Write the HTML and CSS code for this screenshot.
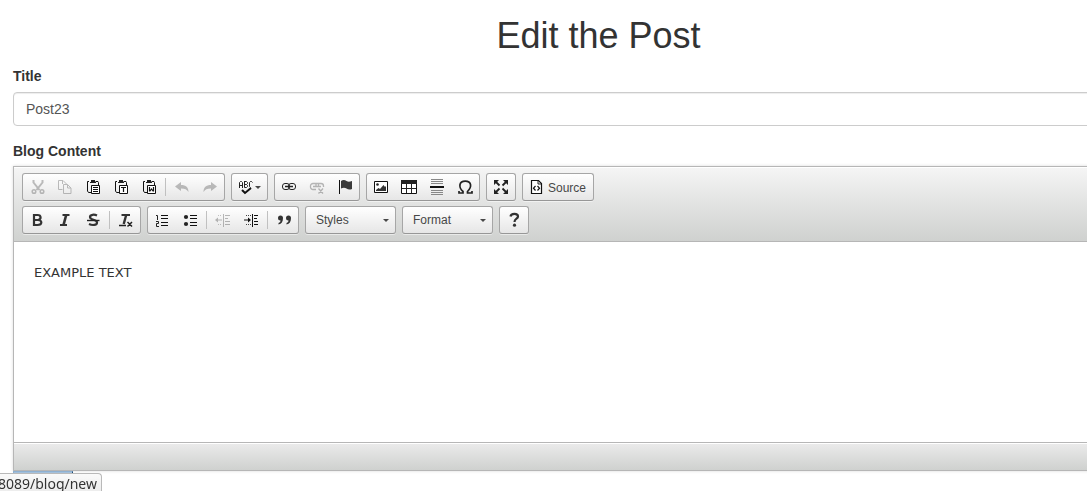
FILE: index.html
```html
<!DOCTYPE html>
<html lang="en">
<head>
<meta charset="utf-8">
<title>Edit the Post</title>
<link rel="stylesheet" href="styles.css">
</head>
<body>
<main class="container">
  <h1 class="heading">Edit the Post</h1>
  <form class="form">
    <div class="field">
      <label class="label" for="title">Title</label>
      <input class="input" id="title" type="text" value="Post23">
    </div>
    <div class="field">
      <label class="label" for="content">Blog Content</label>
      <div class="editor">
        <div class="toolbar">
          <div class="row">
            <div class="group">
              <button type="button" class="tool disabled" aria-label="Cut"><svg class="icon" viewBox="0 0 16 16"><path d="M4.500 1v2.500L10.500 11M13.500 1v2.500L7.500 11" fill="none" stroke="#333" stroke-width="2"/><g fill="none" stroke="#333" stroke-width="1.500"><circle cx="5" cy="12.500" r="1.800"/><circle cx="13" cy="12.500" r="1.800"/></g></svg></button>
              <button type="button" class="tool disabled" aria-label="Copy"><svg class="icon" viewBox="0 0 16 16"><path d="M5.500 10.500h-4v-9H6l3.500 3.500M5.500 1.500V5M6.500 5.500h4l3.500 3.500v5.500H6.500zM10.500 5.500V9H14" fill="none" stroke="#333"/></svg></button>
              <button type="button" class="tool" aria-label="Paste"><svg class="icon" viewBox="0 0 16 16"><path d="M4 2.500H2.500V12l1 1.500H6M10.500 2.500H13l.5 1V6" fill="none" stroke="#111"/><path d="M5 3h1V1h4v2h1v1H5z" fill="#222"/><path d="M6.500 6.500h8v8h-8z" fill="#fff" stroke="#111"/><path d="M8 8.500h5M8 10.500h5M8 12.500h5" stroke="#111"/></svg></button>
              <button type="button" class="tool" aria-label="Paste as plain text"><svg class="icon" viewBox="0 0 16 16"><path d="M4 2.500H2.500V12l1 1.500H6M10.500 2.500H13l.5 1V6" fill="none" stroke="#111"/><path d="M5 3h1V1h4v2h1v1H5z" fill="#222"/><path d="M6.500 6.500h8v8h-8z" fill="#fff" stroke="#111"/><path d="M8 8.500h5M10.500 8.500V13" fill="none" stroke="#111" stroke-width="1.200"/></svg></button>
              <button type="button" class="tool" aria-label="Paste from Word"><svg class="icon" viewBox="0 0 16 16"><path d="M4 2.500H2.500V12l1 1.500H6M10.500 2.500H13l.5 1V6" fill="none" stroke="#111"/><path d="M5 3h1V1h4v2h1v1H5z" fill="#222"/><path d="M6.500 6.500h8v8h-8z" fill="#fff" stroke="#111"/><path d="M8.500 8v4h.5l1.500-2 1.500 2h.5V8" fill="none" stroke="#111" stroke-width="1.200"/></svg></button>
              <span class="separator"></span>
              <button type="button" class="tool disabled" aria-label="Undo"><svg class="icon" viewBox="0 0 16 16"><path d="M1 7.500L7 3v3c5 0 7.500 2.500 7.500 7-1.500-2.500-3.500-3.500-7.500-3.500V12z" fill="#333"/></svg></button>
              <button type="button" class="tool disabled" aria-label="Redo"><svg class="icon" viewBox="0 0 16 16"><path d="M15 7.500L9 3v3c-5 0-7.500 2.500-7.500 7C3 10.500 5 9.500 9 9.500V12z" fill="#333"/></svg></button>
            </div>
            <div class="group">
              <button type="button" class="tool" aria-label="Spell check"><svg class="icon" viewBox="0 0 16 16"><path d="M1.500 9V3.500l1-1h1l1 1V9M1.500 6.500h3M6.500 2v6.500h2l1-1v-1l-1-1h-2M6.500 2.500h2l1 1v1l-1 1M14.500 3.500l-1-1h-1l-1 1v4l1 1" fill="none" stroke="#222"/><path d="M4 11l3 3L13 9" fill="none" stroke="#111" stroke-width="2"/></svg><span class="caret"></span></button>
            </div>
            <div class="group">
              <button type="button" class="tool" aria-label="Link"><svg class="icon" viewBox="0 0 16 16"><rect x="1.500" y="4.500" width="7" height="6" rx="2.500" fill="none" stroke="#222"/><rect x="7.500" y="4.500" width="7" height="6" rx="2.500" fill="none" stroke="#222"/><path d="M4 7.500h8" stroke="#222" stroke-width="1.500"/></svg></button>
              <button type="button" class="tool disabled" aria-label="Unlink"><svg class="icon" viewBox="0 0 16 16"><path d="M7 10.500H4A2.500 2.500 0 0 1 1.500 8V7A2.500 2.500 0 0 1 4 4.500h8A2.500 2.500 0 0 1 14.500 7v1M4 7.500h8M7 5v2.500M9.500 5v2.500M9.500 9.500l4.500 5M14 9.500l-4.500 5" fill="none" stroke="#222" stroke-width="1.300"/></svg></button>
              <button type="button" class="tool" aria-label="Anchor"><svg class="icon" viewBox="0 0 16 16"><path d="M2.500 1v14" stroke="#111"/><path d="M4 2c2-1.500 4-1 5.500 0s3 1 5.500 0v8c-2.500 1-4 .5-5.500-.5S6 8.500 4 9.500z" fill="#3a3a3a"/></svg></button>
            </div>
            <div class="group">
              <button type="button" class="tool" aria-label="Image"><svg class="icon" viewBox="0 0 16 16"><path d="M1.500 2.500h13v11h-13z" fill="#fff" stroke="#111"/><circle cx="4.500" cy="5.500" r="1.300" fill="#222"/><path d="M3 12v-1l2.500-2L7 10l3.500-4 1.500 2 1-1v5z" fill="#333"/></svg></button>
              <button type="button" class="tool" aria-label="Table"><svg class="icon" viewBox="0 0 16 16"><path d="M.5 1.500h15v13H.5z" fill="#fff" stroke="#111"/><path d="M0 1h16v4H0z" fill="#222"/><path d="M5.500 5v9M10.500 5v9M1 9.500h14" stroke="#222"/></svg></button>
              <button type="button" class="tool" aria-label="Horizontal line"><svg class="icon" viewBox="0 0 16 16"><path d="M2 .5h12M2 2.500h12M2 4.500h12M2 11.500h12M2 13.500h12M2 15.500h12" stroke="#888"/><path d="M1 7h14v2H1z" fill="#111"/></svg></button>
              <button type="button" class="tool" aria-label="Special character"><svg class="icon" viewBox="0 0 16 16"><path d="M2 12v2h4v-1.500C3 10 2.500 8 3 5.500 4 1 12.500 1 13.500 5.500c.5 2.500-.5 4.500-3 7V14H15v-2" fill="none" stroke="#222" stroke-width="1.700"/></svg></button>
            </div>
            <div class="group">
              <button type="button" class="tool" aria-label="Maximize"><svg class="icon" viewBox="0 0 16 16"><path d="M1 1h5L1 6zM15 1v5l-5-5zM1 15v-5l5 5zM15 15h-5l5-5z" fill="#222"/><path d="M3 3l3.500 3.500M13 3L9.500 6.500M3 13l3.500-3.500M13 13L9.500 9.500" stroke="#222" stroke-width="1.800"/></svg></button>
            </div>
            <div class="group">
              <button type="button" class="tool"><svg class="icon" viewBox="0 0 16 16"><path d="M2.500 1.500h7l3 3v10h-10z" fill="#fff" stroke="#111" stroke-width="1.200"/><path d="M9 1.500V5h3.500" fill="none" stroke="#222"/><path d="M6.500 7l-2 2.200 2 2.300M8.500 7l2 2.200-2 2.300" fill="none" stroke="#111" stroke-width="1.200"/></svg><span class="tool-text">Source</span></button>
            </div>
          </div>
          <div class="row">
            <div class="group">
              <button type="button" class="tool" aria-label="Bold"><svg class="icon" viewBox="0 0 16 16"><path d="M5 3h3.500c4 0 4 4.500.5 5 4.500 0 4.500 5-.5 5H5zM5 8h4" fill="none" stroke="#333" stroke-width="2.200"/></svg></button>
              <button type="button" class="tool" aria-label="Italic"><svg class="icon" viewBox="0 0 16 16"><path d="M5.500 3h7M3 13h7" stroke="#333" stroke-width="1.800"/><path d="M9.200 3L6.500 13" stroke="#333" stroke-width="2.600"/></svg></button>
              <button type="button" class="tool" aria-label="Strikethrough"><svg class="icon" viewBox="0 0 16 16"><path d="M12 3.500C9.500 2.300 5 2.300 5 5c0 3.500 7 2 7 5.500 0 3-5 3-8 1.500" fill="none" stroke="#333" stroke-width="2.200"/><path d="M2 8.500h12.500" stroke="#222" stroke-width="1.400"/></svg></button>
              <span class="separator"></span>
              <button type="button" class="tool" aria-label="Remove format"><svg class="icon" viewBox="0 0 16 16"><path d="M3.500 3H12" stroke="#333" stroke-width="2"/><path d="M8.200 3L5.700 12" stroke="#333" stroke-width="2.400"/><path d="M1 13.500h7M9.500 10l4.500 4.500M14 10l-4.500 4.500" stroke="#222" stroke-width="1.500"/></svg></button>
            </div>
            <div class="group">
              <button type="button" class="tool" aria-label="Numbered list"><svg class="icon" viewBox="0 0 16 16"><path d="M7 3.500h7M7 6.500h7M7 10.500h7M7 13.500h7" stroke="#111"/><path d="M2 3.500h1.500V8M2 9.500h2.500v2h-2v3H5" fill="none" stroke="#222"/></svg></button>
              <button type="button" class="tool" aria-label="Bulleted list"><svg class="icon" viewBox="0 0 16 16"><path d="M8 3.500h7M8 6.500h7M8 10.500h7M8 13.500h7" stroke="#111"/><circle cx="4" cy="5" r="2.100" fill="#222"/><circle cx="4" cy="12" r="2.100" fill="#222"/></svg></button>
              <span class="separator"></span>
              <button type="button" class="tool disabled" aria-label="Decrease indent"><svg class="icon" viewBox="0 0 16 16"><path d="M8.500 2v13M10 3.500h5M10 6.500h3M10 9.500h5M10 12.500h5M1 8h6" stroke="#222"/><path d="M3 3.500h4M3 12.500h4" stroke="#444" stroke-dasharray="1"/><path d="M0 8l3-2.500v5z" fill="#222"/></svg></button>
              <button type="button" class="tool" aria-label="Increase indent"><svg class="icon" viewBox="0 0 16 16"><path d="M9.500 2v13M11 3.500h4M11 6.500h3M11 9.500h4M11 12.500h4M1 8h5" stroke="#111"/><path d="M3 3.500h5M3 12.500h5" stroke="#444" stroke-dasharray="1"/><path d="M8 8L5 5.500v5z" fill="#111"/></svg></button>
              <span class="separator"></span>
              <button type="button" class="tool" aria-label="Block quote"><svg class="icon" viewBox="0 0 16 16"><path d="M7 6c0 3.500-1.500 6-4.500 6.500V11C4 10.500 4.500 9.500 4.500 8.500A2.500 2.500 0 1 1 7 6zM15 6c0 3.500-1.500 6-4.500 6.500V11c1.500-.5 2-1.500 2-2.500A2.500 2.500 0 1 1 15 6z" fill="#333"/></svg></button>
            </div>
            <button type="button" class="combo"><span>Styles</span><span class="caret"></span></button>
            <button type="button" class="combo"><span>Format</span><span class="caret"></span></button>
            <div class="group">
              <button type="button" class="tool" aria-label="Help"><svg class="icon" viewBox="0 0 16 16"><path d="M4.500 4.500C5 1 12 1 12 4.500c0 2.500-3.500 2-3.500 5.500" fill="none" stroke="#333" stroke-width="2.200"/><circle cx="8.500" cy="13.200" r="1.600" fill="#333"/></svg></button>
            </div>
          </div>
        </div>
        <textarea class="content" id="content">EXAMPLE TEXT</textarea>
        <div class="editor-foot"></div>
      </div>
    </div>
    <button type="submit" class="submit" aria-label="Save"></button>
  </form>
</main>
<div class="status"><span>8089/blog/new</span></div>
</body>
</html>
```
FILE: styles.css
```css
* { box-sizing: border-box; }

body {
  margin: 0;
  height: 100vh;
  overflow: hidden;
  background: #fff;
  color: #333;
  font: 14px/20px "Liberation Sans", Arial, sans-serif;
}

/* The form runs past the right edge of the window. */
.container { margin: 0 -97px 0 13px; }

.heading {
  margin: 0;
  padding: 16px 0 10px;
  font-size: 36px;
  font-weight: 400;
  line-height: 40px;
  text-align: center;
}

.field { margin-bottom: 15px; }

.label {
  display: block;
  margin-bottom: 5px;
  font-weight: 700;
}

.input {
  display: block;
  width: 100%;
  height: 34px;
  margin-top: 6px;
  padding: 6px 12px;
  border: 1px solid #ccc;
  border-radius: 4px;
  background: #fff;
  box-shadow: inset 0 1px 1px rgba(0, 0, 0, .075);
  color: #555;
  font: inherit;
}

.editor {
  border: 1px solid #b6b6b6;
  box-shadow: 0 0 3px rgba(0, 0, 0, .15);
}

.toolbar {
  padding: 6px 8px 2px;
  border-bottom: 1px solid #b6b6b6;
  background: linear-gradient(#f5f5f5, #cfd1cf);
  box-shadow: inset 0 1px 0 #fff;
}

.row {
  display: flex;
  gap: 6px;
  padding-bottom: 5px;
}

.group, .combo {
  display: flex;
  align-items: center;
  height: 28px;
  border: 1px solid #a6a6a6;
  border-bottom-color: #979797;
  border-radius: 3px;
  background: linear-gradient(#fff, #e6e6e6);
  box-shadow: 0 1px 0 rgba(255, 255, 255, .5);
}

.tool {
  display: flex;
  align-items: center;
  height: 26px;
  padding: 0 6px;
  border: 0;
  background: none;
  color: #484848;
  font: 12px/16px "Liberation Sans", Arial, sans-serif;
}

.icon {
  display: block;
  width: 16px;
  height: 16px;
}

.disabled .icon { opacity: .3; }

.separator {
  width: 1px;
  height: 18px;
  margin: 0 2px;
  background: #c0c0c0;
}

.tool-text { padding: 2px 1px 0 3px; }

.caret {
  border: 3px solid transparent;
  border-top-color: #474747;
  border-bottom: 0;
}

.tool .caret { margin-left: 1px; }

.combo {
  justify-content: space-between;
  width: 91px;
  padding: 0 6px 0 10px;
  color: #474747;
  font: 12px/26px "Liberation Sans", Arial, sans-serif;
}

.content {
  display: block;
  width: 100%;
  height: 200px;
  padding: 20px;
  border: 0;
  outline: 0;
  resize: none;
  background: #fff;
  color: #333;
  font: 13px/21px "DejaVu Sans", sans-serif;
}

.editor-foot {
  height: 28px;
  border-top: 1px solid #b6b6b6;
  background: linear-gradient(#ebebeb, #cfd1cf);
  box-shadow: inset 0 1px 0 #fff;
}

.field:last-of-type { margin-bottom: 0; }

.submit {
  display: block;
  width: 60px;
  height: 34px;
  border: 1px solid #8fb0d0;
  border-right-color: #204d74;
  background: #a3c0dc;
}

.status {
  position: fixed;
  bottom: 0;
  left: 0;
  display: flex;
  justify-content: flex-end;
  width: 102px;
  height: 18px;
  padding: 0 4px;
  overflow: hidden;
  border: 1px solid #b9b9b9;
  border-width: 1px 1px 0 0;
  border-radius: 0 4px 0 0;
  background: linear-gradient(#fafafa, #ededed);
  font: 14px/20px "Noto Sans", sans-serif;
}
```
